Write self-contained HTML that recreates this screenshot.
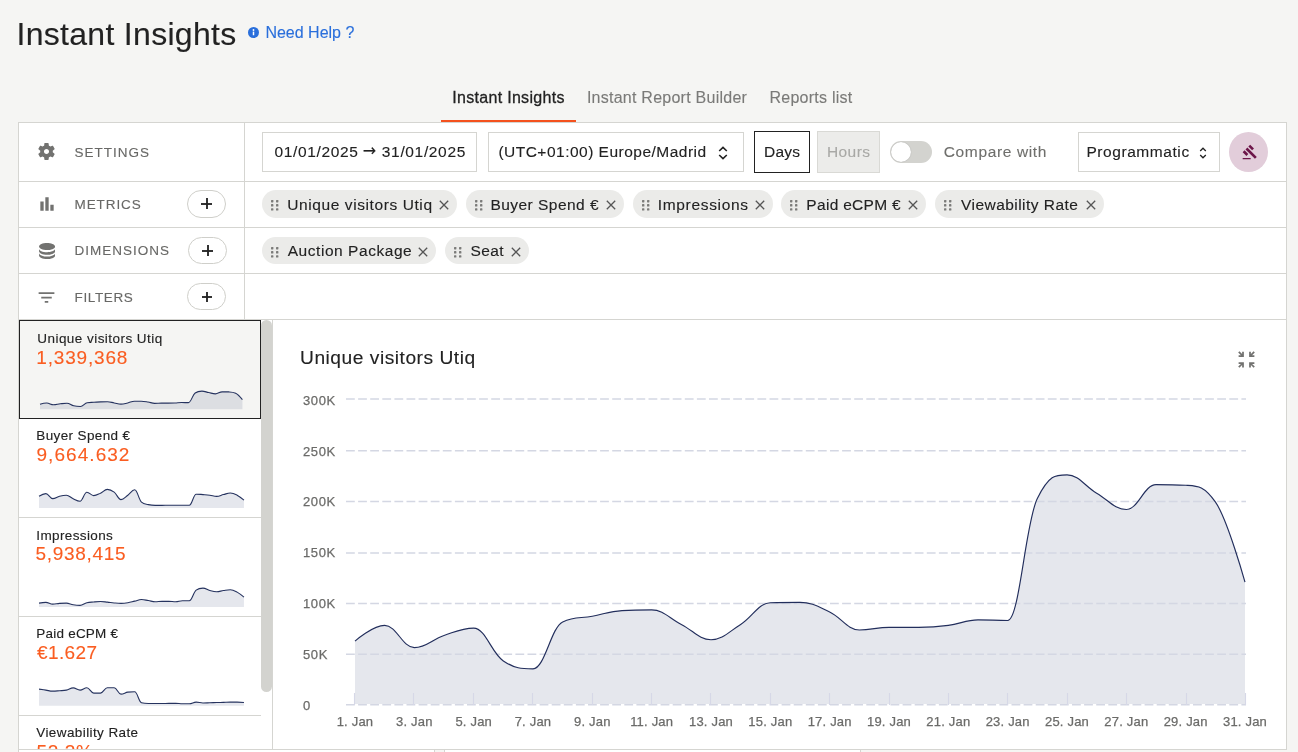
<!DOCTYPE html>
<html lang="en">
<head>
<meta charset="utf-8">
<title>Instant Insights</title>
<style>
*{box-sizing:border-box;margin:0;padding:0}
html,body{width:1298px;height:752px;overflow:hidden;background:#f5f5f3}
body{font-family:"Liberation Sans",sans-serif;color:#222;position:relative;font-size:16px;-webkit-text-stroke:0.12px}
.abs{position:absolute}
.t{position:absolute;white-space:nowrap;line-height:1}
h1{position:absolute;left:16.5px;top:16px;font-size:32px;font-weight:400;line-height:36px;color:#222;white-space:nowrap;letter-spacing:0.3px}
.help{position:absolute;left:265.4px;top:22.6px;font-size:16px;line-height:20px;color:#2a6fdb;white-space:nowrap}
.info{position:absolute;left:248px;top:27px;width:11px;height:11px}
.tabs{position:absolute;left:441px;top:78px;height:44px;display:flex}
.tab{height:44px;padding:0;text-align:center;line-height:40px;font-size:16px;color:#7a7a78;white-space:nowrap;position:relative}
.tab.on{color:#222;-webkit-text-stroke:0.3px #222}
.tab.on:after{content:"";position:absolute;left:0;right:0;bottom:0;height:2px;background:#f4511e}
.panel{position:absolute;left:18px;top:122px;width:1269px;height:628px;background:#fff;border:1px solid #d5d5d1}
.hl{position:absolute;left:0;right:0;height:1px;background:#d5d5d1}
.vl{position:absolute;top:0;width:1px;background:#d5d5d1}
.lab{position:absolute;left:55.5px;font-size:13.5px;letter-spacing:1px;color:#686866;line-height:16px;white-space:nowrap}
.plus{position:absolute;width:39px;height:27px;border:1px solid #cfcfca;border-radius:14px;background:#fff}
.plus:before,.plus:after{content:"";position:absolute;background:#222}
.plus:before{left:13px;top:12px;width:11px;height:2px;opacity:.92}
.plus:after{left:18px;top:6.5px;width:2px;height:11px;opacity:.92}
.p2:after{top:7.2px}
.p3:before{left:13.6px;width:10px;top:11.8px}
.p3:after{left:17.7px;top:8px;height:9.6px}
.box{position:absolute;border:1px solid #d5d5d1;background:#fff;font-size:15.5px;line-height:38px;white-space:nowrap;color:#222}
.chip{position:absolute;height:28px;border-radius:14px;background:#ebebe9;font-size:15.5px;line-height:28px;color:#222;white-space:nowrap}
.chip .tx{position:absolute;left:25px;top:0}
.chip svg.dr{position:absolute;left:9px;top:9.8px}
.chip svg.x{position:absolute;right:7.6px;top:9.9px}
.card{position:absolute;left:0;width:242px;height:99px;border-bottom:1px solid #d5d5d1;background:#fff}
.card .l{position:absolute;left:17.3px;top:11px;font-size:13.5px;line-height:16px;color:#222;white-space:nowrap}
.card .v{position:absolute;left:17.5px;top:27px;font-size:19px;line-height:22px;color:#fa5d21;white-space:nowrap;letter-spacing:0.2px}
.card svg{position:absolute;left:0;top:0}
.card.sel{background:#f5f5f3;border:1px solid #222;}
.arr{font-family:"DejaVu Sans","Liberation Sans",sans-serif;font-size:16px;display:inline-block;width:13.400px;margin:0 5.700px 0 4.200px;position:relative;top:-1.300px;line-height:1;text-align:center}
</style>
</head>
<body>
<div id="root" style="position:absolute;left:0;top:0;width:1298px;height:752px;overflow:hidden;will-change:transform">
<h1>Instant Insights</h1>
<svg class="info" viewBox="0 0 12 12"><circle cx="6" cy="6" r="6" fill="#2a6fdb"/><rect x="5.2" y="5" width="1.6" height="4" fill="#fff"/><circle cx="6" cy="3.3" r="1" fill="#fff"/></svg>
<div class="help">Need Help ?</div>

<div class="tabs">
  <div class="tab on" style="width:135px;letter-spacing:0.3px">Instant Insights</div>
  <div class="tab" style="width:182px;letter-spacing:0.25px">Instant Report Builder</div>
  <div class="tab" style="width:106px;letter-spacing:0.24px">Reports list</div>
</div>

<div class="panel">
  <!-- row separators (coords relative to panel inner: x-19, y-123) -->
  <div class="hl" style="top:58px"></div>
  <div class="hl" style="top:104px"></div>
  <div class="hl" style="top:150px"></div>
  <div class="hl" style="top:196px"></div>
  <div class="vl" style="left:225px;height:197px"></div>

  <!-- left labels -->
  <svg class="abs" style="left:17.100px;top:18.100px" width="21" height="21" viewBox="0 0 24 24"><path fill="#727270" d="M19.14 12.94c.04-.3.06-.61.06-.94 0-.32-.02-.64-.07-.94l2.03-1.58a.49.49 0 0 0 .12-.61l-1.92-3.32a.488.488 0 0 0-.59-.22l-2.39.96c-.5-.38-1.03-.7-1.62-.94l-.36-2.54a.484.484 0 0 0-.48-.41h-3.84c-.24 0-.43.17-.47.41l-.36 2.54c-.59.24-1.13.57-1.62.94l-2.39-.96c-.22-.08-.47 0-.59.22L2.74 8.87c-.12.21-.08.47.12.61l2.03 1.58c-.05.3-.09.63-.09.94s.02.64.07.94l-2.03 1.58a.49.49 0 0 0-.12.61l1.92 3.32c.12.22.37.29.59.22l2.39-.96c.5.38 1.03.7 1.62.94l.36 2.54c.05.24.24.41.48.41h3.84c.24 0 .44-.17.47-.41l.36-2.54c.59-.24 1.13-.56 1.62-.94l2.39.96c.22.08.47 0 .59-.22l1.92-3.32c.12-.22.07-.47-.12-.61l-2.01-1.58zM12 14.900c-1.600 0-2.900-1.300-2.900-2.900s1.300-2.900 2.900-2.900 2.900 1.300 2.900 2.900-1.300 2.900-2.900 2.900z"/></svg>
  <div class="lab" style="top:21.6px;letter-spacing:1.0px">SETTINGS</div>

  <svg class="abs" style="left:17.67px;top:70.67px" width="20" height="20" viewBox="0 0 24 24"><path fill="#727270" d="M4 9h4v11H4zM10 4h4v16h-4zM16 13h4v7h-4z"/></svg>
  <div class="lab" style="top:73.7px;letter-spacing:0.92px">METRICS</div>
  <div class="plus" style="left:168px;top:67px;height:28px"></div>

  <svg class="abs" style="left:20px;top:119.9px" width="16.100" height="16" viewBox="0 0 16 16"><path fill="#727270" d="M8 0C3.580 0 0 1.570 0 3.500S3.580 7 8 7s8-1.570 8-3.500S12.420 0 8 0zM0 5.700v2.600C0 10.230 3.580 11.800 8 11.800s8-1.570 8-3.500V5.700C16 7.630 12.420 9.200 8 9.200S0 7.630 0 5.700zM0 10.100v2.400C0 14.430 3.580 16 8 16s8-1.570 8-3.500v-2.400c0 1.930-3.580 3.500-8 3.500S0 12.030 0 10.100z"/></svg>
  <div class="lab" style="top:119.7px;letter-spacing:0.99px">DIMENSIONS</div>
  <div class="plus p2" style="left:169px;top:114px"></div>

  <svg class="abs" style="left:17.375px;top:163.55px" width="21" height="21" viewBox="0 0 24 24"><path fill="#727270" d="M10 18h4v-2h-4v2zM3 6v2h18V6H3zm3 7h12v-2H6v2z"/></svg>
  <div class="lab" style="top:166.6px;letter-spacing:0.63px">FILTERS</div>
  <div class="plus p3" style="left:168px;top:160px;width:38.500px"></div>

  <!-- settings controls -->
  <div class="box" style="left:243px;top:9px;width:215px;height:40px;padding-left:11.5px"><span style="letter-spacing:0.65px">01/01/2025</span><span class="arr">→</span><span style="letter-spacing:0.65px">31/01/2025</span></div>
  <div class="box" style="left:469px;top:9px;width:256px;height:40px;padding-left:9.4px;letter-spacing:0.49px">(UTC+01:00) Europe/Madrid
    <svg class="abs" style="left:228.800px;top:13.300px" width="10" height="14" viewBox="0 0 10 14"><path d="M1.200 5L5 1.400 8.800 5M1.200 9L5 12.600 8.800 9" fill="none" stroke="#222" stroke-width="1.600"/></svg>
  </div>
  <div class="box" style="left:735px;top:8px;width:56px;height:42px;border-color:#222;line-height:40px;text-align:center;letter-spacing:0.28px;padding-left:0.3px">Days</div>
  <div class="box" style="left:798px;top:8px;width:63px;height:42px;background:#ececea;border-color:#d9d9d5;color:#a9a9a6;line-height:40px;text-align:center;letter-spacing:0.45px;padding-left:0.4px">Hours</div>
  <div class="abs" style="left:871px;top:18px;width:42px;height:22px;border-radius:11px;background:#d3d3cf"><div class="abs" style="left:1px;top:1px;width:20px;height:20px;border-radius:10px;background:#fff;box-shadow:0 0 1px rgba(0,0,0,.3)"></div></div>
  <div class="t" style="left:924.8px;top:21px;font-size:15.5px;color:#6f6f6c;letter-spacing:0.63px">Compare with</div>
  <div class="box" style="left:1059px;top:9px;width:142px;height:40px;padding-left:7.4px;letter-spacing:0.57px">Programmatic
    <svg class="abs" style="left:120px;top:14px" width="8" height="12" viewBox="0 0 8 12"><path d="M1.200 4L4 1.200 6.800 4M1.200 8L4 10.800 6.800 8" fill="none" stroke="#222" stroke-width="1.300"/></svg>
  </div>
  <div class="abs" style="left:1210px;top:9px;width:39px;height:40px;border-radius:50%;background:#e2cdda">
    <svg class="abs" style="left:13.100px;top:11.700px" width="16" height="16" viewBox="0 0 24 24"><path fill="#6d1549" d="M1 21h12v2H1zM5.245 8.070l2.830-2.827 14.140 14.142-2.828 2.828zM12.317 1l5.657 5.656-2.830 2.830-5.654-5.660zM3.825 9.485l5.657 5.657-2.828 2.828-5.657-5.657z"/></svg>
  </div>

  <!-- chips -->
  <div class="chip" style="left:243px;top:67px;width:195px;height:28px;line-height:30px"><svg class="dr" width="8" height="11" viewBox="0 0 8 11"><g fill="#7c7c7a"><rect x="0" y="0" width="2.400" height="2.400" rx=".6"/><rect x="5" y="0" width="2.400" height="2.400" rx=".6"/><rect x="0" y="4.100" width="2.400" height="2.400" rx=".6"/><rect x="5" y="4.100" width="2.400" height="2.400" rx=".6"/><rect x="0" y="8.200" width="2.400" height="2.400" rx=".6"/><rect x="5" y="8.200" width="2.400" height="2.400" rx=".6"/></g></svg><span class="tx" style="left:25.3px;letter-spacing:0.59px">Unique visitors Utiq</span><svg class="x" width="10" height="10" viewBox="0 0 10 10"><path d="M0.800 0.800L9.200 9.200M9.200 0.800L0.800 9.200" stroke="#555" stroke-width="1.300" fill="none"/></svg></div>
  <div class="chip" style="left:447px;top:67px;width:158px;height:28px;line-height:30px"><svg class="dr" width="8" height="11" viewBox="0 0 8 11"><g fill="#7c7c7a"><rect x="0" y="0" width="2.400" height="2.400" rx=".6"/><rect x="5" y="0" width="2.400" height="2.400" rx=".6"/><rect x="0" y="4.100" width="2.400" height="2.400" rx=".6"/><rect x="5" y="4.100" width="2.400" height="2.400" rx=".6"/><rect x="0" y="8.200" width="2.400" height="2.400" rx=".6"/><rect x="5" y="8.200" width="2.400" height="2.400" rx=".6"/></g></svg><span class="tx" style="left:24.4px;letter-spacing:0.47px">Buyer Spend €</span><svg class="x" width="10" height="10" viewBox="0 0 10 10"><path d="M0.800 0.800L9.200 9.200M9.200 0.800L0.800 9.200" stroke="#555" stroke-width="1.300" fill="none"/></svg></div>
  <div class="chip" style="left:614px;top:67px;width:140px;height:28px;line-height:30px"><svg class="dr" width="8" height="11" viewBox="0 0 8 11"><g fill="#7c7c7a"><rect x="0" y="0" width="2.400" height="2.400" rx=".6"/><rect x="5" y="0" width="2.400" height="2.400" rx=".6"/><rect x="0" y="4.100" width="2.400" height="2.400" rx=".6"/><rect x="5" y="4.100" width="2.400" height="2.400" rx=".6"/><rect x="0" y="8.200" width="2.400" height="2.400" rx=".6"/><rect x="5" y="8.200" width="2.400" height="2.400" rx=".6"/></g></svg><span class="tx" style="left:24.7px;letter-spacing:0.68px">Impressions</span><svg class="x" width="10" height="10" viewBox="0 0 10 10"><path d="M0.800 0.800L9.200 9.200M9.200 0.800L0.800 9.200" stroke="#555" stroke-width="1.300" fill="none"/></svg></div>
  <div class="chip" style="left:762px;top:67px;width:145px;height:28px;line-height:30px"><svg class="dr" width="8" height="11" viewBox="0 0 8 11"><g fill="#7c7c7a"><rect x="0" y="0" width="2.400" height="2.400" rx=".6"/><rect x="5" y="0" width="2.400" height="2.400" rx=".6"/><rect x="0" y="4.100" width="2.400" height="2.400" rx=".6"/><rect x="5" y="4.100" width="2.400" height="2.400" rx=".6"/><rect x="0" y="8.200" width="2.400" height="2.400" rx=".6"/><rect x="5" y="8.200" width="2.400" height="2.400" rx=".6"/></g></svg><span class="tx" style="left:25.3px;letter-spacing:0.31px">Paid eCPM €</span><svg class="x" width="10" height="10" viewBox="0 0 10 10"><path d="M0.800 0.800L9.200 9.200M9.200 0.800L0.800 9.200" stroke="#555" stroke-width="1.300" fill="none"/></svg></div>
  <div class="chip" style="left:916px;top:67px;width:169px;height:28px;line-height:30px"><svg class="dr" width="8" height="11" viewBox="0 0 8 11"><g fill="#7c7c7a"><rect x="0" y="0" width="2.400" height="2.400" rx=".6"/><rect x="5" y="0" width="2.400" height="2.400" rx=".6"/><rect x="0" y="4.100" width="2.400" height="2.400" rx=".6"/><rect x="5" y="4.100" width="2.400" height="2.400" rx=".6"/><rect x="0" y="8.200" width="2.400" height="2.400" rx=".6"/><rect x="5" y="8.200" width="2.400" height="2.400" rx=".6"/></g></svg><span class="tx" style="left:26px;letter-spacing:0.46px">Viewability Rate</span><svg class="x" width="10" height="10" viewBox="0 0 10 10"><path d="M0.800 0.800L9.200 9.200M9.200 0.800L0.800 9.200" stroke="#555" stroke-width="1.300" fill="none"/></svg></div>
  <div class="chip" style="left:243px;top:114px;width:173.5px;height:27px;line-height:28.4px"><svg class="dr" width="8" height="11" viewBox="0 0 8 11"><g fill="#7c7c7a"><rect x="0" y="0" width="2.400" height="2.400" rx=".6"/><rect x="5" y="0" width="2.400" height="2.400" rx=".6"/><rect x="0" y="4.100" width="2.400" height="2.400" rx=".6"/><rect x="5" y="4.100" width="2.400" height="2.400" rx=".6"/><rect x="0" y="8.200" width="2.400" height="2.400" rx=".6"/><rect x="5" y="8.200" width="2.400" height="2.400" rx=".6"/></g></svg><span class="tx" style="left:25.7px;letter-spacing:0.55px">Auction Package</span><svg class="x" width="10" height="10" viewBox="0 0 10 10"><path d="M0.800 0.800L9.200 9.200M9.200 0.800L0.800 9.200" stroke="#555" stroke-width="1.300" fill="none"/></svg></div>
  <div class="chip" style="left:426px;top:114px;width:84px;height:27px;line-height:28.4px"><svg class="dr" width="8" height="11" viewBox="0 0 8 11"><g fill="#7c7c7a"><rect x="0" y="0" width="2.400" height="2.400" rx=".6"/><rect x="5" y="0" width="2.400" height="2.400" rx=".6"/><rect x="0" y="4.100" width="2.400" height="2.400" rx=".6"/><rect x="5" y="4.100" width="2.400" height="2.400" rx=".6"/><rect x="0" y="8.200" width="2.400" height="2.400" rx=".6"/><rect x="5" y="8.200" width="2.400" height="2.400" rx=".6"/></g></svg><span class="tx" style="left:25.4px;letter-spacing:0.4px">Seat</span><svg class="x" width="10" height="10" viewBox="0 0 10 10"><path d="M0.800 0.800L9.200 9.200M9.200 0.800L0.800 9.200" stroke="#555" stroke-width="1.300" fill="none"/></svg></div>

  <!-- metric cards -->
  <div class="abs" style="left:0;top:196px;width:242px;height:430px;overflow:hidden">
    <div class="card sel" style="top:1px;height:99px"><svg width="242" height="98" viewBox="0 0 242 98"><path d="M 20.00 83.25 C 20.00 83.25 24.05 82.00 26.75 82.00 C 29.45 82.00 30.79 83.76 33.49 83.76 C 36.19 83.76 37.54 83.11 40.24 82.80 C 42.94 82.49 44.29 82.22 46.99 82.22 C 49.69 82.22 51.03 84.19 53.73 84.81 C 56.43 85.44 57.78 85.44 60.48 85.44 C 63.18 85.44 64.53 82.18 67.23 81.73 C 69.93 81.28 71.27 81.46 73.97 81.28 C 76.67 81.10 78.02 80.90 80.72 80.83 C 83.42 80.77 84.77 80.77 87.47 80.77 C 90.17 80.77 91.51 81.45 94.21 81.92 C 96.91 82.40 98.26 83.14 100.96 83.14 C 103.66 83.14 105.01 82.51 107.71 81.92 C 110.41 81.34 111.75 80.23 114.45 80.21 C 117.15 80.18 118.50 80.18 121.20 80.18 C 123.90 80.18 125.25 80.51 127.95 80.94 C 130.65 81.38 131.99 82.37 134.69 82.37 C 137.39 82.37 138.74 82.15 141.44 82.15 C 144.14 82.15 145.49 82.15 148.19 82.15 C 150.89 82.15 152.23 82.12 154.93 82.00 C 157.63 81.89 158.98 81.56 161.68 81.56 C 164.38 81.56 165.73 81.62 168.43 81.62 C 171.13 81.62 172.47 73.82 175.17 71.96 C 177.87 70.10 179.22 70.10 181.92 70.10 C 184.62 70.10 185.97 71.00 188.67 71.55 C 191.37 72.09 192.71 72.84 195.41 72.84 C 198.11 72.84 199.46 70.87 202.16 70.87 C 204.86 70.87 206.21 70.87 208.91 70.92 C 211.61 70.98 212.95 70.92 215.65 72.24 C 218.35 73.55 222.40 78.58 222.40 78.58 L 222.40 88.30 L 20.00 88.30 Z" fill="#2b3a67" fill-opacity="0.12"/><path d="M 20.00 83.25 C 20.00 83.25 24.05 82.00 26.75 82.00 C 29.45 82.00 30.79 83.76 33.49 83.76 C 36.19 83.76 37.54 83.11 40.24 82.80 C 42.94 82.49 44.29 82.22 46.99 82.22 C 49.69 82.22 51.03 84.19 53.73 84.81 C 56.43 85.44 57.78 85.44 60.48 85.44 C 63.18 85.44 64.53 82.18 67.23 81.73 C 69.93 81.28 71.27 81.46 73.97 81.28 C 76.67 81.10 78.02 80.90 80.72 80.83 C 83.42 80.77 84.77 80.77 87.47 80.77 C 90.17 80.77 91.51 81.45 94.21 81.92 C 96.91 82.40 98.26 83.14 100.96 83.14 C 103.66 83.14 105.01 82.51 107.71 81.92 C 110.41 81.34 111.75 80.23 114.45 80.21 C 117.15 80.18 118.50 80.18 121.20 80.18 C 123.90 80.18 125.25 80.51 127.95 80.94 C 130.65 81.38 131.99 82.37 134.69 82.37 C 137.39 82.37 138.74 82.15 141.44 82.15 C 144.14 82.15 145.49 82.15 148.19 82.15 C 150.89 82.15 152.23 82.12 154.93 82.00 C 157.63 81.89 158.98 81.56 161.68 81.56 C 164.38 81.56 165.73 81.62 168.43 81.62 C 171.13 81.62 172.47 73.82 175.17 71.96 C 177.87 70.10 179.22 70.10 181.92 70.10 C 184.62 70.10 185.97 71.00 188.67 71.55 C 191.37 72.09 192.71 72.84 195.41 72.84 C 198.11 72.84 199.46 70.87 202.16 70.87 C 204.86 70.87 206.21 70.87 208.91 70.92 C 211.61 70.98 212.95 70.92 215.65 72.24 C 218.35 73.55 222.40 78.58 222.40 78.58" fill="none" stroke="#26335f" stroke-width="1.100"/></svg><div class="l" style="top:10.04px;letter-spacing:0.45px">Unique visitors Utiq</div><div class="v" style="top:26.0px;letter-spacing:0.82px;left:16.3px">1,339,368</div></div>
    <div class="card" style="top:100px;height:99px"><svg width="242" height="98" viewBox="0 0 242 98"><path d="M 20.03 77.19 C 20.03 77.19 24.13 74.58 26.86 74.58 C 29.60 74.58 30.96 79.59 33.70 79.59 C 36.43 79.59 37.79 77.87 40.53 77.19 C 43.26 76.50 44.62 76.18 47.36 76.18 C 50.09 76.18 51.46 78.59 54.19 79.79 C 56.92 80.99 58.29 82.19 61.02 82.19 C 63.75 82.19 65.12 73.18 67.85 73.18 C 70.58 73.18 71.95 76.58 74.68 76.58 C 77.41 76.58 78.78 75.42 81.51 74.18 C 84.24 72.94 85.61 70.38 88.34 70.38 C 91.08 70.38 92.44 71.14 95.17 73.18 C 97.91 75.22 99.27 80.59 102.00 80.59 C 104.74 80.59 106.10 78.15 108.84 76.18 C 111.57 74.22 112.93 70.78 115.67 70.78 C 118.40 70.78 119.77 80.79 122.50 83.20 C 125.23 85.60 126.60 84.96 129.33 85.60 C 132.06 86.24 133.43 86.40 136.16 86.40 C 138.89 86.40 140.26 86.40 142.99 86.40 C 145.72 86.40 147.09 86.20 149.82 86.20 C 152.55 86.20 153.92 86.20 156.65 86.20 C 159.38 86.20 160.75 86.20 163.48 86.20 C 166.22 86.20 167.58 86.20 170.31 86.20 C 173.05 86.20 174.41 75.18 177.15 75.18 C 179.88 75.18 181.24 75.38 183.98 75.58 C 186.71 75.78 188.07 75.82 190.81 76.18 C 193.54 76.54 194.91 77.39 197.64 77.39 C 200.37 77.39 201.74 76.26 204.47 75.58 C 207.20 74.90 208.57 73.98 211.30 73.98 C 214.03 73.98 215.40 74.74 218.13 76.18 C 220.86 77.63 224.96 81.19 224.96 81.19 L 224.96 89.00 L 20.03 89.00 Z" fill="#2b3a67" fill-opacity="0.12"/><path d="M 20.03 77.19 C 20.03 77.19 24.13 74.58 26.86 74.58 C 29.60 74.58 30.96 79.59 33.70 79.59 C 36.43 79.59 37.79 77.87 40.53 77.19 C 43.26 76.50 44.62 76.18 47.36 76.18 C 50.09 76.18 51.46 78.59 54.19 79.79 C 56.92 80.99 58.29 82.19 61.02 82.19 C 63.75 82.19 65.12 73.18 67.85 73.18 C 70.58 73.18 71.95 76.58 74.68 76.58 C 77.41 76.58 78.78 75.42 81.51 74.18 C 84.24 72.94 85.61 70.38 88.34 70.38 C 91.08 70.38 92.44 71.14 95.17 73.18 C 97.91 75.22 99.27 80.59 102.00 80.59 C 104.74 80.59 106.10 78.15 108.84 76.18 C 111.57 74.22 112.93 70.78 115.67 70.78 C 118.40 70.78 119.77 80.79 122.50 83.20 C 125.23 85.60 126.60 84.96 129.33 85.60 C 132.06 86.24 133.43 86.40 136.16 86.40 C 138.89 86.40 140.26 86.40 142.99 86.40 C 145.72 86.40 147.09 86.20 149.82 86.20 C 152.55 86.20 153.92 86.20 156.65 86.20 C 159.38 86.20 160.75 86.20 163.48 86.20 C 166.22 86.20 167.58 86.20 170.31 86.20 C 173.05 86.20 174.41 75.18 177.15 75.18 C 179.88 75.18 181.24 75.38 183.98 75.58 C 186.71 75.78 188.07 75.82 190.81 76.18 C 193.54 76.54 194.91 77.39 197.64 77.39 C 200.37 77.39 201.74 76.26 204.47 75.58 C 207.20 74.90 208.57 73.98 211.30 73.98 C 214.03 73.98 215.40 74.74 218.13 76.18 C 220.86 77.63 224.96 81.19 224.96 81.19" fill="none" stroke="#26335f" stroke-width="1.100"/></svg><div class="l" style="top:9.04px;letter-spacing:0.37px">Buyer Spend €</div><div class="v" style="top:25.2px;letter-spacing:1.05px">9,664.632</div></div>
    <div class="card" style="top:199px;height:99px"><svg width="242" height="98" viewBox="0 0 242 98"><path d="M 20.03 85.14 C 20.03 85.14 24.13 84.34 26.86 84.34 C 29.60 84.34 30.96 86.14 33.70 86.14 C 36.43 86.14 37.79 85.54 40.53 85.34 C 43.26 85.14 44.62 85.14 47.36 85.14 C 50.09 85.14 51.46 86.30 54.19 86.74 C 56.92 87.18 58.29 87.34 61.02 87.34 C 63.75 87.34 65.12 85.42 67.85 84.74 C 70.58 84.06 71.95 84.18 74.68 83.94 C 77.41 83.70 78.78 83.54 81.51 83.54 C 84.24 83.54 85.61 83.86 88.34 84.14 C 91.08 84.42 92.44 84.70 95.17 84.94 C 97.91 85.18 99.27 85.34 102.00 85.34 C 104.74 85.34 106.10 85.18 108.84 84.74 C 111.57 84.30 112.93 83.78 115.67 83.14 C 118.40 82.50 119.77 81.54 122.50 81.54 C 125.23 81.54 126.60 82.10 129.33 82.54 C 132.06 82.98 133.43 83.74 136.16 83.74 C 138.89 83.74 140.26 83.34 142.99 83.34 C 145.72 83.34 147.09 83.34 149.82 83.34 C 152.55 83.34 153.92 83.74 156.65 83.74 C 159.38 83.74 160.75 82.74 163.48 82.74 C 166.22 82.74 167.58 82.74 170.31 82.74 C 173.05 82.74 174.41 74.12 177.15 72.12 C 179.88 70.12 181.24 70.12 183.98 70.12 C 186.71 70.12 188.07 71.80 190.81 72.52 C 193.54 73.24 194.91 73.72 197.64 73.72 C 200.37 73.72 201.74 72.92 204.47 72.52 C 207.20 72.12 208.57 71.72 211.30 71.72 C 214.03 71.72 215.40 72.64 218.13 74.12 C 220.86 75.61 224.96 79.13 224.96 79.13 L 224.96 88.90 L 20.03 88.90 Z" fill="#2b3a67" fill-opacity="0.12"/><path d="M 20.03 85.14 C 20.03 85.14 24.13 84.34 26.86 84.34 C 29.60 84.34 30.96 86.14 33.70 86.14 C 36.43 86.14 37.79 85.54 40.53 85.34 C 43.26 85.14 44.62 85.14 47.36 85.14 C 50.09 85.14 51.46 86.30 54.19 86.74 C 56.92 87.18 58.29 87.34 61.02 87.34 C 63.75 87.34 65.12 85.42 67.85 84.74 C 70.58 84.06 71.95 84.18 74.68 83.94 C 77.41 83.70 78.78 83.54 81.51 83.54 C 84.24 83.54 85.61 83.86 88.34 84.14 C 91.08 84.42 92.44 84.70 95.17 84.94 C 97.91 85.18 99.27 85.34 102.00 85.34 C 104.74 85.34 106.10 85.18 108.84 84.74 C 111.57 84.30 112.93 83.78 115.67 83.14 C 118.40 82.50 119.77 81.54 122.50 81.54 C 125.23 81.54 126.60 82.10 129.33 82.54 C 132.06 82.98 133.43 83.74 136.16 83.74 C 138.89 83.74 140.26 83.34 142.99 83.34 C 145.72 83.34 147.09 83.34 149.82 83.34 C 152.55 83.34 153.92 83.74 156.65 83.74 C 159.38 83.74 160.75 82.74 163.48 82.74 C 166.22 82.74 167.58 82.74 170.31 82.74 C 173.05 82.74 174.41 74.12 177.15 72.12 C 179.88 70.12 181.24 70.12 183.98 70.12 C 186.71 70.12 188.07 71.80 190.81 72.52 C 193.54 73.24 194.91 73.72 197.64 73.72 C 200.37 73.72 201.74 72.92 204.47 72.52 C 207.20 72.12 208.57 71.72 211.30 71.72 C 214.03 71.72 215.40 72.64 218.13 74.12 C 220.86 75.61 224.96 79.13 224.96 79.13" fill="none" stroke="#26335f" stroke-width="1.100"/></svg><div class="l" style="top:9.54px;letter-spacing:0.37px">Impressions</div><div class="v" style="top:25.2px;letter-spacing:0.7px;left:16.5px">5,938,415</div></div>
    <div class="card" style="top:298px;height:99px"><svg width="242" height="98" viewBox="0 0 242 98"><path d="M 20.03 72.12 C 20.03 72.12 24.13 72.72 26.86 73.12 C 29.60 73.53 30.96 74.13 33.70 74.13 C 36.43 74.13 37.79 73.93 40.53 73.73 C 43.26 73.53 44.62 73.69 47.36 73.12 C 50.09 72.56 51.46 70.92 54.19 70.92 C 56.92 70.92 58.29 73.12 61.02 73.12 C 63.75 73.12 65.12 70.72 67.85 70.72 C 70.58 70.72 71.95 76.13 74.68 76.13 C 77.41 76.13 78.78 76.13 81.51 76.13 C 84.24 76.13 85.61 70.72 88.34 70.72 C 91.08 70.72 92.44 70.72 95.17 70.72 C 97.91 70.72 99.27 77.13 102.00 77.13 C 104.74 77.13 106.10 75.53 108.84 75.13 C 111.57 74.73 112.93 74.73 115.67 74.73 C 118.40 74.73 119.77 84.94 122.50 85.75 C 125.23 86.55 126.60 86.55 129.33 86.55 C 132.06 86.55 133.43 86.55 136.16 86.55 C 138.89 86.55 140.26 86.55 142.99 86.55 C 145.72 86.55 147.09 86.35 149.82 86.35 C 152.55 86.35 153.92 86.35 156.65 86.35 C 159.38 86.35 160.75 86.75 163.48 86.75 C 166.22 86.75 167.58 86.75 170.31 86.75 C 173.05 86.75 174.41 85.14 177.15 85.14 C 179.88 85.14 181.24 85.95 183.98 85.95 C 186.71 85.95 188.07 85.83 190.81 85.75 C 193.54 85.67 194.91 85.63 197.64 85.54 C 200.37 85.46 201.74 85.42 204.47 85.34 C 207.20 85.26 208.57 85.14 211.30 85.14 C 214.03 85.14 215.40 85.14 218.13 85.14 C 220.86 85.14 224.96 85.54 224.96 85.54 L 224.96 88.70 L 20.03 88.70 Z" fill="#2b3a67" fill-opacity="0.12"/><path d="M 20.03 72.12 C 20.03 72.12 24.13 72.72 26.86 73.12 C 29.60 73.53 30.96 74.13 33.70 74.13 C 36.43 74.13 37.79 73.93 40.53 73.73 C 43.26 73.53 44.62 73.69 47.36 73.12 C 50.09 72.56 51.46 70.92 54.19 70.92 C 56.92 70.92 58.29 73.12 61.02 73.12 C 63.75 73.12 65.12 70.72 67.85 70.72 C 70.58 70.72 71.95 76.13 74.68 76.13 C 77.41 76.13 78.78 76.13 81.51 76.13 C 84.24 76.13 85.61 70.72 88.34 70.72 C 91.08 70.72 92.44 70.72 95.17 70.72 C 97.91 70.72 99.27 77.13 102.00 77.13 C 104.74 77.13 106.10 75.53 108.84 75.13 C 111.57 74.73 112.93 74.73 115.67 74.73 C 118.40 74.73 119.77 84.94 122.50 85.75 C 125.23 86.55 126.60 86.55 129.33 86.55 C 132.06 86.55 133.43 86.55 136.16 86.55 C 138.89 86.55 140.26 86.55 142.99 86.55 C 145.72 86.55 147.09 86.35 149.82 86.35 C 152.55 86.35 153.92 86.35 156.65 86.35 C 159.38 86.35 160.75 86.75 163.48 86.75 C 166.22 86.75 167.58 86.75 170.31 86.75 C 173.05 86.75 174.41 85.14 177.15 85.14 C 179.88 85.14 181.24 85.95 183.98 85.95 C 186.71 85.95 188.07 85.83 190.81 85.75 C 193.54 85.67 194.91 85.63 197.64 85.54 C 200.37 85.46 201.74 85.42 204.47 85.34 C 207.20 85.26 208.57 85.14 211.30 85.14 C 214.03 85.14 215.40 85.14 218.13 85.14 C 220.86 85.14 224.96 85.54 224.96 85.54" fill="none" stroke="#26335f" stroke-width="1.100"/></svg><div class="l" style="top:9.14px;letter-spacing:0.22px">Paid eCPM €</div><div class="v" style="top:25.4px;letter-spacing:0.4px;left:18px">€1.627</div></div>
    <div class="card" style="top:397px;height:99px"><div class="l" style="top:9.24px;letter-spacing:0.4px">Viewability Rate</div><div class="v" style="top:24.9px;letter-spacing:0.65px;left:17.5px">52.2%</div></div>
  </div>
  <!-- scrollbar -->
  <div class="abs" style="left:242px;top:197px;width:11px;height:372px;border-radius:5.5px;background:#d3d3cf"></div>
  <div class="vl" style="left:253px;top:197px;height:430px"></div>

  <!-- chart -->
  <div class="t" style="left:281px;top:224.850px;font-size:19.200px;letter-spacing:0.52px;color:#222">Unique visitors Utiq</div>
  <svg class="abs" style="left:1217px;top:225.900px" width="21" height="21" viewBox="0 0 24 24"><path fill="#727270" d="M9 9V3H7v2.590L3.910 2.500 2.500 3.910 5.590 7H3v2h6zm12 0V7h-2.590l3.090-3.090-1.410-1.410L17 5.590V3h-2v6h6zM3 15v2h2.590L2.500 20.090l1.410 1.410L7 18.410V21h2v-6H3zm12 0v6h2v-2.590l3.090 3.090 1.410-1.410L18.410 17H21v-2h-6z"/></svg>
  <svg class="abs" style="left:254px;top:197px" width="1013" height="430" viewBox="273 320 1013 430" font-family='"Liberation Sans",sans-serif'>
    <path d="M 355.00 641.10 C 355.00 641.10 372.80 625.40 384.67 625.40 C 396.53 625.40 402.47 647.60 414.33 647.60 C 426.20 647.60 432.13 639.40 444.00 635.50 C 455.87 631.60 461.80 628.10 473.67 628.10 C 485.53 628.10 491.47 653.00 503.33 660.90 C 515.20 668.80 521.13 668.80 533.00 668.80 C 544.87 668.80 550.80 627.60 562.67 621.90 C 574.53 616.20 580.47 618.46 592.33 616.20 C 604.20 613.94 610.13 611.40 622.00 610.60 C 633.87 609.80 639.80 609.80 651.67 609.80 C 663.53 609.80 669.47 618.42 681.33 624.40 C 693.20 630.38 699.13 639.70 711.00 639.70 C 722.87 639.70 728.80 631.80 740.67 624.40 C 752.53 617.00 758.47 603.00 770.33 602.70 C 782.20 602.40 788.13 602.40 800.00 602.40 C 811.87 602.40 817.80 606.48 829.67 612.00 C 841.53 617.52 847.47 630.00 859.33 630.00 C 871.20 630.00 877.13 627.30 889.00 627.30 C 900.87 627.30 906.80 627.30 918.67 627.30 C 930.53 627.30 936.47 626.90 948.33 625.40 C 960.20 623.90 966.13 619.80 978.00 619.80 C 989.87 619.80 995.80 620.50 1007.67 620.50 C 1019.53 620.50 1025.47 521.90 1037.33 498.40 C 1049.20 474.90 1055.13 474.90 1067.00 474.90 C 1078.87 474.90 1084.80 486.28 1096.67 493.20 C 1108.53 500.12 1114.47 509.50 1126.33 509.50 C 1138.20 509.50 1144.13 484.60 1156.00 484.60 C 1167.87 484.60 1173.80 484.60 1185.67 485.30 C 1197.53 486.00 1203.47 485.30 1215.33 501.90 C 1227.20 518.50 1245.00 582.10 1245.00 582.10 L 1245.00 704 L 355.00 704 Z" fill="#2b3a67" fill-opacity="0.12" stroke="none"/>
    <path d="M 346 399.0 L 1246 399.0" stroke="#d4d7e3" stroke-width="1.500" stroke-dasharray="8.800,3.300" fill="none"/>
    <text x="303" y="404.70" font-size="13" fill="#6b6b69" stroke="#6b6b69" stroke-width="0.250" letter-spacing="0.6">300K</text>
    <path d="M 346 450.65 L 1246 450.65" stroke="#d4d7e3" stroke-width="1.500" stroke-dasharray="8.800,3.300" fill="none"/>
    <text x="303" y="455.52" font-size="13" fill="#6b6b69" stroke="#6b6b69" stroke-width="0.250" letter-spacing="0.6">250K</text>
    <path d="M 346 501.45 L 1246 501.45" stroke="#d4d7e3" stroke-width="1.500" stroke-dasharray="8.800,3.300" fill="none"/>
    <text x="303" y="506.34" font-size="13" fill="#6b6b69" stroke="#6b6b69" stroke-width="0.250" letter-spacing="0.6">200K</text>
    <path d="M 346 553.0 L 1246 553.0" stroke="#d4d7e3" stroke-width="1.500" stroke-dasharray="8.800,3.300" fill="none"/>
    <text x="303" y="557.16" font-size="13" fill="#6b6b69" stroke="#6b6b69" stroke-width="0.250" letter-spacing="0.6">150K</text>
    <path d="M 346 603.6 L 1246 603.6" stroke="#d4d7e3" stroke-width="1.500" stroke-dasharray="8.800,3.300" fill="none"/>
    <text x="303" y="607.98" font-size="13" fill="#6b6b69" stroke="#6b6b69" stroke-width="0.250" letter-spacing="0.6">100K</text>
    <path d="M 346 654.35 L 1246 654.35" stroke="#d4d7e3" stroke-width="1.500" stroke-dasharray="8.800,3.300" fill="none"/>
    <text x="303" y="658.80" font-size="13" fill="#6b6b69" stroke="#6b6b69" stroke-width="0.250" letter-spacing="0.6">50K</text>
    <path d="M 346 704.8 L 1246 704.8" stroke="#d4d7e3" stroke-width="1.500" stroke-dasharray="8.800,3.300" fill="none"/>
    <text x="303" y="709.62" font-size="13" fill="#6b6b69" stroke="#6b6b69" stroke-width="0.250" letter-spacing="0.6">0</text>
    <path d="M 354.5 693 L 354.5 705" stroke="#d6d8e7" stroke-width="1.100"/>
    <text x="355.0" y="726" font-size="13" fill="#6b6b69" stroke="#6b6b69" stroke-width="0.250" letter-spacing="0.2" text-anchor="middle">1. Jan</text>
    <path d="M 413.5 693 L 413.5 705" stroke="#d6d8e7" stroke-width="1.100"/>
    <text x="414.3" y="726" font-size="13" fill="#6b6b69" stroke="#6b6b69" stroke-width="0.250" letter-spacing="0.2" text-anchor="middle">3. Jan</text>
    <path d="M 473.5 693 L 473.5 705" stroke="#d6d8e7" stroke-width="1.100"/>
    <text x="473.7" y="726" font-size="13" fill="#6b6b69" stroke="#6b6b69" stroke-width="0.250" letter-spacing="0.2" text-anchor="middle">5. Jan</text>
    <path d="M 532.5 693 L 532.5 705" stroke="#d6d8e7" stroke-width="1.100"/>
    <text x="533.0" y="726" font-size="13" fill="#6b6b69" stroke="#6b6b69" stroke-width="0.250" letter-spacing="0.2" text-anchor="middle">7. Jan</text>
    <path d="M 592.5 693 L 592.5 705" stroke="#d6d8e7" stroke-width="1.100"/>
    <text x="592.3" y="726" font-size="13" fill="#6b6b69" stroke="#6b6b69" stroke-width="0.250" letter-spacing="0.2" text-anchor="middle">9. Jan</text>
    <path d="M 651.5 693 L 651.5 705" stroke="#d6d8e7" stroke-width="1.100"/>
    <text x="651.7" y="726" font-size="13" fill="#6b6b69" stroke="#6b6b69" stroke-width="0.250" letter-spacing="0.2" text-anchor="middle">11. Jan</text>
    <path d="M 710.5 693 L 710.5 705" stroke="#d6d8e7" stroke-width="1.100"/>
    <text x="711.0" y="726" font-size="13" fill="#6b6b69" stroke="#6b6b69" stroke-width="0.250" letter-spacing="0.2" text-anchor="middle">13. Jan</text>
    <path d="M 770.5 693 L 770.5 705" stroke="#d6d8e7" stroke-width="1.100"/>
    <text x="770.3" y="726" font-size="13" fill="#6b6b69" stroke="#6b6b69" stroke-width="0.250" letter-spacing="0.2" text-anchor="middle">15. Jan</text>
    <path d="M 829.5 693 L 829.5 705" stroke="#d6d8e7" stroke-width="1.100"/>
    <text x="829.7" y="726" font-size="13" fill="#6b6b69" stroke="#6b6b69" stroke-width="0.250" letter-spacing="0.2" text-anchor="middle">17. Jan</text>
    <path d="M 889.5 693 L 889.5 705" stroke="#d6d8e7" stroke-width="1.100"/>
    <text x="889.0" y="726" font-size="13" fill="#6b6b69" stroke="#6b6b69" stroke-width="0.250" letter-spacing="0.2" text-anchor="middle">19. Jan</text>
    <path d="M 948.5 693 L 948.5 705" stroke="#d6d8e7" stroke-width="1.100"/>
    <text x="948.3" y="726" font-size="13" fill="#6b6b69" stroke="#6b6b69" stroke-width="0.250" letter-spacing="0.2" text-anchor="middle">21. Jan</text>
    <path d="M 1007.5 693 L 1007.5 705" stroke="#d6d8e7" stroke-width="1.100"/>
    <text x="1007.7" y="726" font-size="13" fill="#6b6b69" stroke="#6b6b69" stroke-width="0.250" letter-spacing="0.2" text-anchor="middle">23. Jan</text>
    <path d="M 1067.5 693 L 1067.5 705" stroke="#d6d8e7" stroke-width="1.100"/>
    <text x="1067.0" y="726" font-size="13" fill="#6b6b69" stroke="#6b6b69" stroke-width="0.250" letter-spacing="0.2" text-anchor="middle">25. Jan</text>
    <path d="M 1126.5 693 L 1126.5 705" stroke="#d6d8e7" stroke-width="1.100"/>
    <text x="1126.3" y="726" font-size="13" fill="#6b6b69" stroke="#6b6b69" stroke-width="0.250" letter-spacing="0.2" text-anchor="middle">27. Jan</text>
    <path d="M 1186.5 693 L 1186.5 705" stroke="#d6d8e7" stroke-width="1.100"/>
    <text x="1185.7" y="726" font-size="13" fill="#6b6b69" stroke="#6b6b69" stroke-width="0.250" letter-spacing="0.2" text-anchor="middle">29. Jan</text>
    <path d="M 1245.5 693 L 1245.5 705" stroke="#d6d8e7" stroke-width="1.100"/>
    <text x="1245.0" y="726" font-size="13" fill="#6b6b69" stroke="#6b6b69" stroke-width="0.250" letter-spacing="0.2" text-anchor="middle">31. Jan</text>
    <path d="M 355.00 641.10 C 355.00 641.10 372.80 625.40 384.67 625.40 C 396.53 625.40 402.47 647.60 414.33 647.60 C 426.20 647.60 432.13 639.40 444.00 635.50 C 455.87 631.60 461.80 628.10 473.67 628.10 C 485.53 628.10 491.47 653.00 503.33 660.90 C 515.20 668.80 521.13 668.80 533.00 668.80 C 544.87 668.80 550.80 627.60 562.67 621.90 C 574.53 616.20 580.47 618.46 592.33 616.20 C 604.20 613.94 610.13 611.40 622.00 610.60 C 633.87 609.80 639.80 609.80 651.67 609.80 C 663.53 609.80 669.47 618.42 681.33 624.40 C 693.20 630.38 699.13 639.70 711.00 639.70 C 722.87 639.70 728.80 631.80 740.67 624.40 C 752.53 617.00 758.47 603.00 770.33 602.70 C 782.20 602.40 788.13 602.40 800.00 602.40 C 811.87 602.40 817.80 606.48 829.67 612.00 C 841.53 617.52 847.47 630.00 859.33 630.00 C 871.20 630.00 877.13 627.30 889.00 627.30 C 900.87 627.30 906.80 627.30 918.67 627.30 C 930.53 627.30 936.47 626.90 948.33 625.40 C 960.20 623.90 966.13 619.80 978.00 619.80 C 989.87 619.80 995.80 620.50 1007.67 620.50 C 1019.53 620.50 1025.47 521.90 1037.33 498.40 C 1049.20 474.90 1055.13 474.90 1067.00 474.90 C 1078.87 474.90 1084.80 486.28 1096.67 493.20 C 1108.53 500.12 1114.47 509.50 1126.33 509.50 C 1138.20 509.50 1144.13 484.60 1156.00 484.60 C 1167.87 484.60 1173.80 484.60 1185.67 485.30 C 1197.53 486.00 1203.47 485.30 1215.33 501.90 C 1227.20 518.50 1245.00 582.10 1245.00 582.10" fill="none" stroke="#222e5c" stroke-width="1.150" stroke-linejoin="round"/>
  </svg>
</div>
<!-- sliver of next section -->
<div class="abs" style="left:18px;top:750px;width:417px;height:4px;background:#fff;border-left:1px solid #d5d5d1;border-right:1px solid #d5d5d1"></div>
<div class="abs" style="left:444px;top:750px;width:417px;height:4px;background:#fff;border-left:1px solid #d5d5d1;border-right:1px solid #d5d5d1"></div>
</div>
</body>
</html>
